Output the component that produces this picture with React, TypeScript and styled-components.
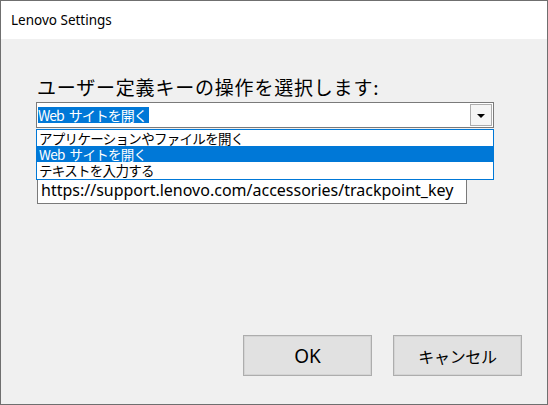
import React from "react";
import styled, { createGlobalStyle } from "styled-components";

const Global = createGlobalStyle`
  html, body { margin: 0; padding: 0; background: #f0f0f0; }
  #root { width: 548px; height: 405px; }
  * { box-sizing: border-box; }
`;

const Window = styled.div`
  width: 548px;
  height: 405px;
  border: 1px solid #6f6f6f;
  display: flex;
  flex-direction: column;
  background: #f0f0f0;
  font-family: "Noto Sans", "Noto Sans CJK JP", sans-serif;
  color: #000;
`;

const TitleBar = styled.div`
  height: 38px;
  background: #fff;
  display: flex;
  align-items: center;
  padding-left: 10px;
  font-size: 13.5px;
  flex: none;
`;

const Body = styled.div`
  flex: 1;
  display: flex;
  flex-direction: column;
  padding: 36px 25px 28px 35px;
`;

const Label = styled.div`
  font-family: "Noto Sans CJK JP", sans-serif;
  font-size: 19px;
  line-height: 24px;
  letter-spacing: 0.8px;
  margin-left: 1px;
`;

const ComboWrap = styled.div`
  position: relative;
  margin-top: 3px;
  width: 458px;
`;

const Combo = styled.div`
  height: 26px;
  border: 1px solid #7a7a7a;
  background: #fff;
  display: flex;
  align-items: center;
  padding-left: 1px;
  padding-right: 1px;
`;

const Selected = styled.span`
  flex: none;
  background: #0078d7;
  color: #fff;
  font-family: "Noto Sans CJK JP", sans-serif;
  font-size: 14px;
  line-height: 16px;
  height: 16px;
  letter-spacing: -1px;
  padding-right: 2px;
`;

const Gap = styled.span`
  display: inline-block;
  width: 5px;
`;

const Spacer = styled.div`
  flex: 1;
`;

const DropButton = styled.div`
  width: 22px;
  height: 22px;
  border: 1px solid #adadad;
  background: #f5f5f5;
  display: flex;
  align-items: center;
  justify-content: center;
`;

const Arrow = styled.div`
  width: 0;
  height: 0;
  border-left: 4px solid transparent;
  border-right: 4px solid transparent;
  border-top: 4px solid #000;
  margin-top: 1px;
`;

const List = styled.div`
  position: absolute;
  left: 0;
  top: calc(100% + 1px);
  width: 458px;
  border: 1px solid #0078d7;
  background: #fff;
  padding-bottom: 1px;
  z-index: 2;
`;

const Item = styled.div<{ $active?: boolean }>`
  height: 16px;
  line-height: 16px;
  padding-left: 2px;
  font-family: "Noto Sans CJK JP", sans-serif;
  font-size: 13.5px;
  letter-spacing: -0.7px;
  background: ${(p) => (p.$active ? "#0078d7" : "#fff")};
  color: ${(p) => (p.$active ? "#fff" : "#000")};
`;

const TextBox = styled.div`
  margin-top: 48px;
  margin-left: 1px;
  width: 430px;
  height: 28px;
  border: 1px solid #7a7a7a;
  background: #fff;
  display: flex;
  align-items: center;
  padding-left: 3px;
  font-size: 16px;
  white-space: nowrap;
`;

const ButtonRow = styled.div`
  margin-top: auto;
  display: flex;
  justify-content: flex-end;
  gap: 21px;
`;

const Button = styled.div<{ $cjk?: boolean }>`
  width: 129px;
  height: 41px;
  border: 1px solid #adadad;
  box-shadow: inset 0 0 0 1px #d4d4d4;
  background: #e1e1e1;
  display: flex;
  align-items: center;
  justify-content: center;
  font-family: ${(p) => (p.$cjk ? '"Noto Sans CJK JP", sans-serif' : '"Noto Sans", sans-serif')};
  font-size: ${(p) => (p.$cjk ? "16px" : "19px")};
  letter-spacing: ${(p) => (p.$cjk ? "-0.3px" : "0")};
`;

export default function App() {
  return (
    <>
      <Global />
      <Window>
        <TitleBar>Lenovo Settings</TitleBar>
        <Body>
          <Label>ユーザー定義キーの操作を選択します:</Label>
          <ComboWrap>
            <Combo>
              <Selected>
                Web<Gap />サイトを開く
              </Selected>
              <Spacer />
              <DropButton>
                <Arrow />
              </DropButton>
            </Combo>
            <List>
              <Item>アプリケーションやファイルを開く</Item>
              <Item $active>
                Web<Gap />サイトを開く
              </Item>
              <Item>テキストを入力する</Item>
            </List>
          </ComboWrap>
          <TextBox>https://support.lenovo.com/accessories/trackpoint_key</TextBox>
          <ButtonRow>
            <Button>OK</Button>
            <Button $cjk>キャンセル</Button>
          </ButtonRow>
        </Body>
      </Window>
    </>
  );
}
